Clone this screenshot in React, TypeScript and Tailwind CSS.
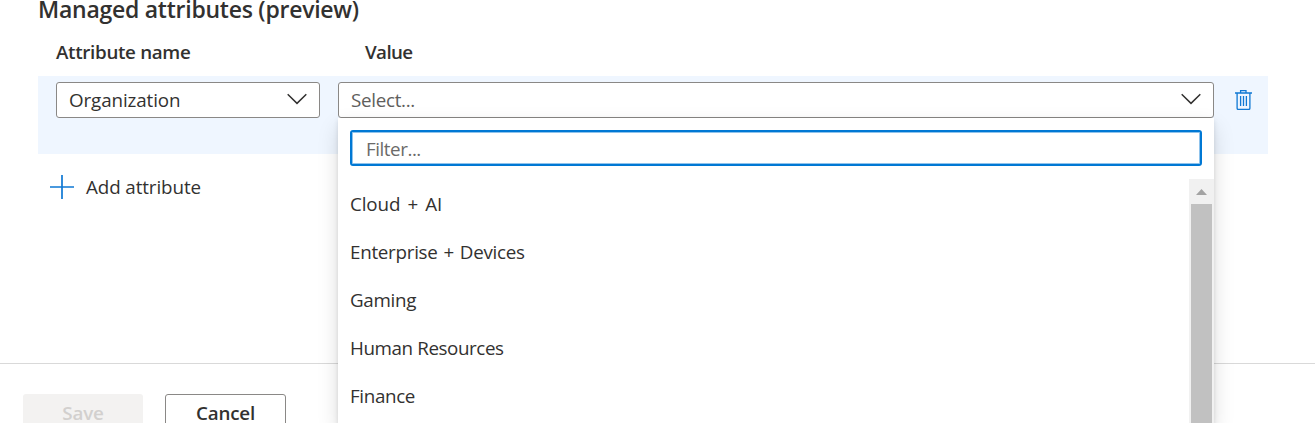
import React from "react";

const options = [
  { label: "Cloud + AI", style: "tracking-[-0.1px] [word-spacing:2.3px]" },
  { label: "Enterprise + Devices", style: "tracking-[-0.27px] [word-spacing:1.3px]" },
  { label: "Gaming", style: "tracking-[-0.3px]" },
  { label: "Human Resources", style: "tracking-[-0.4px]" },
  { label: "Finance", style: "tracking-[-0.35px]" },
];

function Chevron() {
  return (
    <svg className="h-[12px] w-[20px] shrink-0 -translate-y-px" viewBox="0 0 20 12" fill="none" stroke="#323130" strokeWidth="1.5">
      <path d="M0.7 1.2 L10 10.4 L19.3 1.2" />
    </svg>
  );
}

function TrashIcon() {
  return (
    <svg className="h-[20px] w-[17px]" viewBox="0 0 17 20" fill="none" stroke="#0f78d4" strokeWidth="1.3">
      <path d="M0 3H17M5.6 3V0.7H11V3M2.1 3V18.3Q2.1 19.4 3.2 19.4H13.8Q14.9 19.4 14.9 18.3V3" />
      <path d="M5.6 6V16M8.5 6V16M11.4 6V16" />
    </svg>
  );
}

function Dropdown() {
  return (
    <div className="absolute top-[35px] -left-px z-10 flex h-[306px] w-[876px] flex-col bg-white shadow-[0_9px_20px_rgba(0,0,0,0.132),0_2px_5px_rgba(0,0,0,0.11)]">
      <div className="mx-[12px] mt-[12px] flex h-[36px] shrink-0 items-center rounded-[3px] border-2 border-[#0078d4] pt-[2px] pl-[14px] tracking-[-0.45px] text-[#6b6a69] shadow-[inset_0_0_0_1px_#8fc3ec]">
        Filter...
      </div>
      <div className="mt-[13px] flex min-h-0 flex-1">
        <ul className="flex-1 pt-px pl-[12px]">
          {options.map((o) => (
            <li key={o.label} className={`flex h-12 items-center ${o.style}`}>
              {o.label}
            </li>
          ))}
        </ul>
        <div className="flex w-[25px] flex-col items-center bg-[#f1f1f1]">
          <div className="flex h-[25px] shrink-0 items-center justify-center">
            <svg className="h-[6px] w-[11px]" viewBox="0 0 11 6">
              <path d="M0 6L5.5 0L11 6Z" fill="#a3a3a3" />
            </svg>
          </div>
          <div className="w-[21px] flex-1 bg-[#c1c1c1]" />
        </div>
      </div>
    </div>
  );
}

export default function App() {
  return (
    <div className="h-[423px] w-[1315px] overflow-hidden bg-white font-['Open_Sans','Noto_Sans',sans-serif] text-[18.8px] leading-[24px] font-[370] text-[#323130]">
      <main className="h-[363px] pl-[38px]">
        <h1 className="h-[24px] text-[23px] leading-[19px] font-[570] tracking-[-0.25px] whitespace-nowrap">
          Managed attributes (preview)
        </h1>
        <div className="flex h-[52px] items-center pt-[4px] pl-[18px] font-[570] tracking-[-0.32px]">
          <span className="w-[309px]">Attribute name</span>
          <span className="tracking-[-0.6px]">Value</span>
        </div>
        <div className="flex h-[78px] w-[1230px] items-start bg-[#eff6ff] pt-[6px] pl-[18px]">
          <div className="flex h-[36px] w-[264px] items-center justify-between rounded-[3px] border border-[#8a8886] bg-white pr-[12px] pl-[12px]">
            <span className="tracking-[-0.1px]">Organization</span>
            <Chevron />
          </div>
          <div className="relative ml-[18px] flex h-[36px] w-[876px] items-center justify-between rounded-[3px] border border-[#8a8886] bg-white pr-[12px] pl-[12px]">
            <span className="tracking-[-0.3px] text-[#605e5c]">Select...</span>
            <Chevron />
            <Dropdown />
          </div>
          <button className="mt-[8px] ml-[21px]" aria-label="Delete">
            <TrashIcon />
          </button>
        </div>
        <button className="mt-[21px] ml-[12px] flex h-[24px] items-center">
          <svg className="mr-[12px] h-[24px] w-[24px]" viewBox="0 0 24 24" stroke="#0f78d4" strokeWidth="1.7">
            <path d="M0 12H24M12 0V24" />
          </svg>
          <span className="tracking-[-0.1px]">Add attribute</span>
        </button>
      </main>
      <footer className="flex h-[60px] gap-[22px] border-t border-[#d9d9d9] pt-[30px] pl-[23px] font-[570]">
        <button className="flex h-[38px] w-[120px] items-center justify-center rounded-[3px] bg-[#f3f2f1] tracking-[-0.1px] text-[#d2d0ce]">
          Save
        </button>
        <button className="flex h-[38px] w-[121px] items-center justify-center rounded-[3px] border border-[#8a8886] tracking-[-0.2px]">
          Cancel
        </button>
      </footer>
    </div>
  );
}
